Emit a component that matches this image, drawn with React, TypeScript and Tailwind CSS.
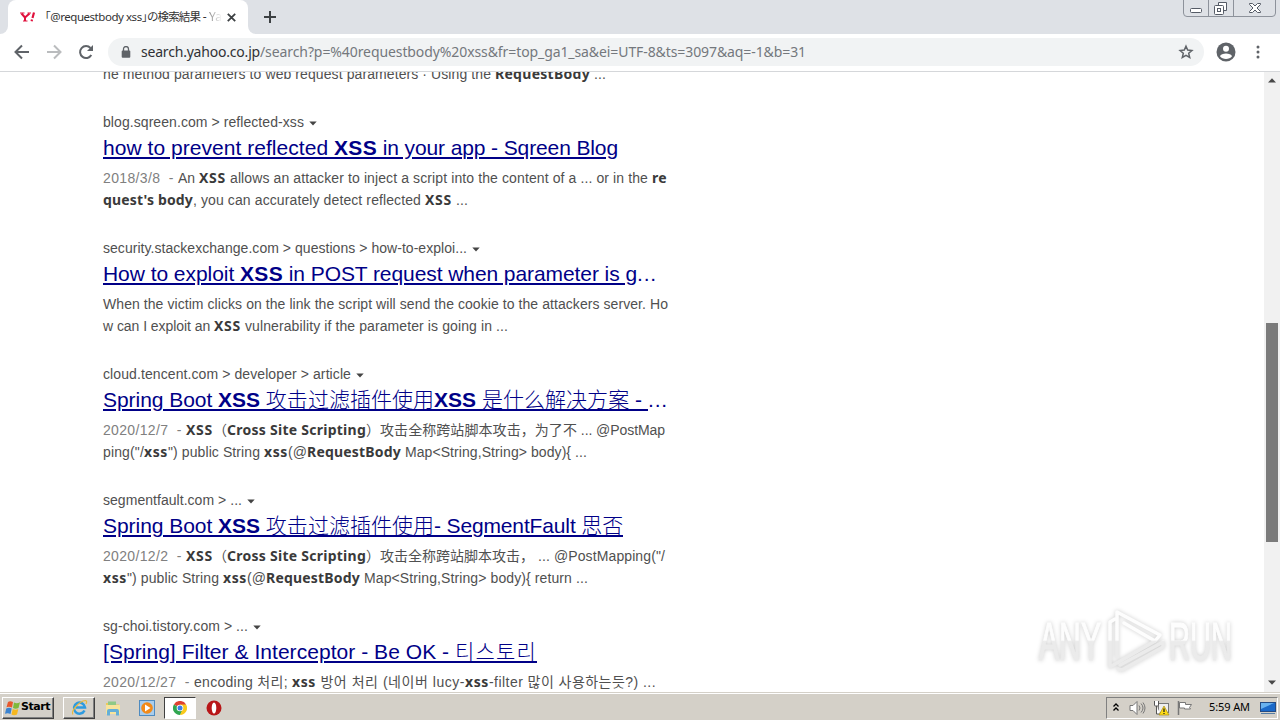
import React, { useLayoutEffect, useRef } from 'react';

interface Run {
  text: string;
  width: number;
  bold?: boolean;
  muted?: boolean;
  plain?: boolean;
}

interface Result {
  crumb: Run;
  title: Run[];
  lines: Run[][];
}

const RESULTS: Result[] = [
  {
    crumb: { text: 'blog.sqreen.com > reflected-xss', width: 201 },
    title: [
      { text: 'how to prevent reflected ', width: 231 },
      { text: 'XSS', width: 43, bold: true },
      { text: ' in your app - Sqreen Blog', width: 241 },
    ],
    lines: [
      [
        { text: '2018/3/8  - ', width: 75, muted: true },
        { text: 'An ', width: 21 },
        { text: 'XSS', width: 27, bold: true },
        { text: ' allows an attacker to inject a script into the content of a ... or in the ', width: 426 },
        { text: 're', width: 15, bold: true },
      ],
      [
        { text: "quest's body", width: 90, bold: true },
        { text: ', you can accurately detect reflected ', width: 232 },
        { text: 'XSS', width: 27, bold: true },
        { text: ' ...', width: 16 },
      ],
    ],
  },
  {
    crumb: { text: 'security.stackexchange.com > questions > how-to-exploi...', width: 364 },
    title: [
      { text: 'How to exploit ', width: 137 },
      { text: 'XSS', width: 43, bold: true },
      { text: ' in POST request when parameter is g', width: 354 },
      { text: '...', width: 20, plain: true },
    ],
    lines: [
      [{ text: 'When the victim clicks on the link the script will send the cookie to the attackers server. Ho', width: 565 }],
      [
        { text: 'w can I exploit an ', width: 111 },
        { text: 'XSS', width: 27, bold: true },
        { text: ' vulnerability if the parameter is going in ...', width: 267 },
      ],
    ],
  },
  {
    crumb: { text: 'cloud.tencent.com > developer > article', width: 248 },
    title: [
      { text: 'Spring Boot ', width: 115 },
      { text: 'XSS', width: 42, bold: true },
      { text: ' 攻击过滤插件使用', width: 174 },
      { text: 'XSS', width: 42, bold: true },
      { text: ' 是什么解决方案 - ', width: 172 },
      { text: '...', width: 20, plain: true },
    ],
    lines: [
      [
        { text: '2020/12/7  - ', width: 83, muted: true },
        { text: 'XSS', width: 27, bold: true },
        { text: '（', width: 14 },
        { text: 'Cross Site Scripting', width: 139, bold: true },
        { text: '）', width: 14 },
        { text: '攻击全称跨站脚本攻击，为了不', width: 197 },
        { text: ' ... @PostMap', width: 88 },
      ],
      [
        { text: 'ping("/', width: 41 },
        { text: 'xss', width: 24, bold: true },
        { text: '") public String ', width: 96 },
        { text: 'xss', width: 24, bold: true },
        { text: '(@', width: 19 },
        { text: 'RequestBody', width: 94, bold: true },
        { text: ' Map<String,String> body){ ...', width: 186 },
      ],
    ],
  },
  {
    crumb: { text: 'segmentfault.com > ...', width: 139 },
    title: [
      { text: 'Spring Boot ', width: 115 },
      { text: 'XSS', width: 42, bold: true },
      { text: ' 攻击过滤插件使用', width: 174 },
      { text: '- SegmentFault 思否', width: 189 },
    ],
    lines: [
      [
        { text: '2020/12/2  - ', width: 83, muted: true },
        { text: 'XSS', width: 27, bold: true },
        { text: '（', width: 14 },
        { text: 'Cross Site Scripting', width: 139, bold: true },
        { text: '）', width: 14 },
        { text: '攻击全称跨站脚本攻击，', width: 154 },
        { text: ' ... @PostMapping("/', width: 131 },
      ],
      [
        { text: 'xss', width: 24, bold: true },
        { text: '") public String ', width: 96 },
        { text: 'xss', width: 24, bold: true },
        { text: '(@', width: 19 },
        { text: 'RequestBody', width: 94, bold: true },
        { text: ' Map<String,String> body){ return ...', width: 228 },
      ],
    ],
  },
  {
    crumb: { text: 'sg-choi.tistory.com > ...', width: 145 },
    title: [
      { text: '[Spring] Filter & Interceptor - Be OK - ', width: 352 },
      { text: '티스토리', width: 82 },
    ],
    lines: [
      [
        { text: '2020/12/27  - ', width: 91, muted: true },
        { text: 'encoding 처리; ', width: 98 },
        { text: 'xss', width: 24, bold: true },
        { text: ' 방어 처리 (네이버 lucy-', width: 149 },
        { text: 'xss', width: 24, bold: true },
        { text: '-filter 많이 사용하는듯?) ...', width: 167 },
      ],
    ],
  },
];

const LAST_LINE: Run[] = [
  { text: 'he method parameters to web request parameters · Using the ', width: 392 },
  { text: 'RequestBody', width: 95, bold: true },
  { text: ' ...', width: 16 },
];

// Spreads the letters of a text so that it takes exactly the given width
const Fit: React.FC<{ text: string; width: number; className?: string }> = ({ text, width, className = '' }) => {
  const ref = useRef<HTMLSpanElement>(null);

  useLayoutEffect(() => {
    const el = ref.current;
    if (!el) return;
    el.style.letterSpacing = '0px';
    const natural = el.getBoundingClientRect().width;
    el.style.letterSpacing = `${(width - natural) / text.length}px`;
  }, [text, width]);

  return (
    <span ref={ref} className={`shrink-0 whitespace-pre ${className}`}>{text}</span>
  );
};

const TextLine: React.FC<{ runs: Run[] }> = ({ runs }) => (
  <p className="flex h-[22px] text-[14px] leading-[22px] text-[#505050]">
    {runs.map((r, i) => (
      <Fit
        key={i}
        text={r.text}
        width={r.width}
        className={
          r.bold
            ? "font-bold text-[#3a3a3a] font-['Noto_Sans','Noto_Sans_CJK_SC',sans-serif]"
            : r.muted
              ? 'text-[#808080]'
              : ''
        }
      />
    ))}
  </p>
);

const ResultItem: React.FC<{ result: Result }> = ({ result }) => (
  <article className="mb-[26px]">
    <div className="flex h-[22px] items-center text-[14px] leading-[22px] text-[#505050]">
      <Fit text={result.crumb.text} width={result.crumb.width} />
      <svg className="ml-[5px] mt-[3px]" width="8" height="5" viewBox="0 0 8 5"><path d="M0.3 0.5h7.4L4 4.6z" fill="#444" /></svg>
    </div>
    <h3 className="flex h-[30px] text-[21px] font-light leading-[30px] text-[#000087]">
      {result.title.map((r, i) => (
        <Fit
          key={i}
          text={r.text}
          width={r.width}
          className={r.plain ? '' : r.bold ? 'font-bold underline decoration-2 underline-offset-2' : 'underline decoration-2 underline-offset-2'}
        />
      ))}
    </h3>
    <div className="mt-1">
      {result.lines.map((line, i) => <TextLine key={i} runs={line} />)}
    </div>
  </article>
);

const WindowButtons = () => (
  <svg className="ml-auto mr-[3px]" width="94" height="18" viewBox="0 0 94 18" fill="none">
    <path d="M.5 0v13q0 3.5 3.5 3.5h85q3.5 0 3.5-3.5V0M25.5 0v16M50.5 0v16" stroke="#8d929b" />
    <rect x="7.5" y="8.500" width="11" height="4" rx="1" fill="#fff" stroke="#555b66" />
    <path d="M35.500 5V2.500h8v8H41" fill="#fff" stroke="#555b66" />
    <rect x="31.500" y="5.500" width="9" height="9" rx="1" fill="#fff" stroke="#555b66" />
    <rect x="34.500" y="8.500" width="3" height="3" stroke="#555b66" />
    <path d="M66.500 3.500h3l2.500 2.500 2.500-2.500h3v1L74 8l3.500 3.500v1h-3L72 10l-2.500 2.500h-3v-1L70 8l-3.500-3.500z" fill="#fff" stroke="#555b66" />
  </svg>
);

const TabStrip = () => (
  <div className="flex h-[34px] items-start bg-[#dee1e6]">
    <div className="flex h-[34px] w-2 items-end bg-white">
      <div className="h-[34px] w-2 rounded-br-lg bg-[#dee1e6]" />
    </div>
    <div className="h-[34px] w-60 bg-[#dee1e6]">
      <div className="flex h-[34px] items-center rounded-t-lg bg-white pl-3">
        <svg width="16" height="16" viewBox="0 0 16 16" fill="none" stroke="#e0103c">
          <path d="M1.500 4.500L5 8.500M9.500 4.500L5 8.500M5 8.500V12" strokeWidth="2" />
          <path d="M0 4h4.500M7.500 4H11M3 12h4.500" strokeWidth="1" />
          <path d="M14 3.500l-1.500 5.500M12 10.500l-.4 1.700" strokeWidth="2.200" />
        </svg>
        <div className="ml-[9px] w-[177px] overflow-hidden text-[12px] leading-4 text-[#333]">
          <div className="flex font-['Noto_Sans','Noto_Sans_CJK_JP',sans-serif]">
            <Fit text="｢@requestbody xss｣" width={102} className="text-[11.5px]" />
            <Fit text="の検索結果" width={53} className="text-[11.5px]" />
            <Fit text=" - " width={9} />
            <span className="bg-linear-to-r from-[#888] to-white bg-clip-text text-transparent">Ya</span>
          </div>
        </div>
        <svg className="ml-[5px]" width="9" height="9" viewBox="0 0 9 9"><path d="M.8.8l7.400 7.400M8.200.8L.8 8.200" stroke="#3c4043" strokeWidth="1.800" /></svg>
      </div>
    </div>
    <div className="h-[34px] w-2 bg-white">
      <div className="h-[34px] w-2 rounded-bl-lg bg-[#dee1e6]" />
    </div>
    <svg className="ml-[8px] mt-[11px]" width="12" height="12" viewBox="0 0 12 12"><path d="M6 0v12M0 6h12" stroke="#3c4043" strokeWidth="2" /></svg>
    <WindowButtons />
  </div>
);

const Toolbar = () => (
  <div className="flex h-[38px] items-center border-b border-[#d5d7da] bg-white pl-[14px] pb-[1px]">
    <svg width="16" height="16" viewBox="0 0 16 16" fill="none" stroke="#5f6368" strokeWidth="2"><path d="M15 8H2M8 1.500L1.500 8 8 14.500" /></svg>
    <svg className="ml-4" width="16" height="16" viewBox="0 0 16 16" fill="none" stroke="#babcbe" strokeWidth="2"><path d="M1 8h13M8 1.500L14.500 8 8 14.500" /></svg>
    <svg className="ml-4" width="16" height="16" viewBox="0 0 16 16"><path d="M13.300 11A6 6 0 1 1 12.500 4" fill="none" stroke="#5f6368" strokeWidth="2" /><path d="M15 1v6H9z" fill="#5f6368" /></svg>
    <div className="ml-[14px] flex h-7 w-[1096px] items-center rounded-full bg-[#f1f3f4] pl-[13px] pr-[10px]">
      <svg width="10" height="12" viewBox="0 0 10 12"><path d="M2.500 5V3a2.500 2.500 0 0 1 5 0v2" fill="none" stroke="#5f6368" strokeWidth="1.300" /><rect x="0.700" y="4.500" width="8.600" height="7.300" rx="1" fill="#5f6368" /></svg>
      <div className="ml-[10px] flex font-['Noto_Sans',sans-serif] text-[14px] leading-7">
        <Fit text="search.yahoo.co.jp" width={119} className="text-[#303134]" />
        <Fit text="/search?p=%40requestbody%20xss&fr=top_ga1_sa&ei=UTF-8&ts=3097&aq=-1&b=31" width={546} className="text-[#74787d]" />
      </div>
      <svg className="ml-auto" width="16" height="16" viewBox="0 0 16 16"><path d="M8 2.200l1.700 3.900 4.200.4-3.200 2.800 1 4.200L8 11.300l-3.700 2.200 1-4.200-3.200-2.800 4.200-.4z" fill="none" stroke="#5f6368" strokeWidth="1.500" /></svg>
    </div>
    <svg className="ml-3" width="20" height="20" viewBox="0 0 20 20"><circle cx="10" cy="10" r="9.500" fill="#5f6368" /><circle cx="10" cy="6.700" r="3" fill="#fff" /><path d="M4 14.200c1-3.700 11-3.700 12 0-2.500 3.700-9.500 3.700-12 0z" fill="#fff" /></svg>
    <svg className="ml-[20px]" width="4" height="14" viewBox="0 0 4 14" fill="#5f6368"><circle cx="2" cy="2" r="1.500" /><circle cx="2" cy="7" r="1.500" /><circle cx="2" cy="12" r="1.500" /></svg>
  </div>
);

const ScrollBar = () => (
  <div className="flex w-4 shrink-0 flex-col items-center bg-[#f1f1f1]">
    <svg className="mt-[6px]" width="8" height="5" viewBox="0 0 8 5"><path d="M0 4.500h8L4 .3z" fill="#484848" /></svg>
    <div className="mt-[240px] h-[219px] w-3 bg-[#7b7b7b]" />
    <svg className="mb-[7px] mt-auto" width="8" height="5" viewBox="0 0 8 5"><path d="M0 .5h8L4 4.700z" fill="#484848" /></svg>
  </div>
);

const Watermark = () => (
  <svg
    className="absolute left-[1030px] top-[600px] drop-shadow-[0_0_2px_rgba(0,0,0,0.2)]"
    width="212"
    height="80"
    viewBox="0 0 212 80"
  >
    <defs>
      <linearGradient id="sheen" x1="0" y1="0" x2="0" y2="80" gradientUnits="userSpaceOnUse">
        <stop offset="0.500" stopColor="#fdfdfd" />
        <stop offset="0.520" stopColor="#ebebeb" />
      </linearGradient>
    </defs>
    <g fill="url(#sheen)" stroke="url(#sheen)" strokeWidth="1" fontFamily="'Liberation Sans Narrow', 'Liberation Sans', sans-serif" fontSize="53">
      <text x="9" y="59.500" textLength="62" lengthAdjust="spacingAndGlyphs">ANY</text>
      <text x="139" y="59.500" textLength="63" lengthAdjust="spacingAndGlyphs">RUN</text>
    </g>
    <g fill="none" stroke="url(#sheen)" strokeWidth="3.500" strokeLinejoin="round" strokeLinecap="round">
      <path d="M85 19l-5 3v45l5-3" />
      <path d="M87 57V12l43 23-5 6-31-18" />
      <path d="M87 63l38-22" />
      <path d="M88 69l4 1 41-23v-5l-43 23" />
    </g>
  </svg>
);

const Taskbar = () => (
  <footer className="flex h-7 items-center border-t border-[#d4d0c8] bg-[#d4d0c8] shadow-[inset_0_1px_0_#fff]">
    <div className="ml-[2px] mt-[2px] flex h-[22px] w-[52px] items-center border border-b-[#404040] border-l-white border-r-[#404040] border-t-white pl-[2px] shadow-[inset_-1px_-1px_0_#808080]">
      <svg width="16" height="16" viewBox="0 0 16 16">
        <path d="M3 2q2-1.500 5 0L7 7.500q-3-1.500-5.500-.3z" fill="#e8582c" />
        <path d="M9 2.500q3 1.500 6-.3L13.500 8q-3 1.300-5.500 0z" fill="#7fb93a" />
        <path d="M1.200 8.500q3-1.300 5.500 0L5.500 14Q3 12.500 0 13.700z" fill="#3b83d0" />
        <path d="M7.700 9q3 1.300 5.600 0L12 14.500q-3 1.300-5.500 0z" fill="#f6b820" />
      </svg>
      <span className="font-['DejaVu_Sans',sans-serif] text-[11px] font-bold text-black"><Fit text="Start" width={29} /></span>
    </div>
    <div className="ml-[9px] mt-[2px] flex h-[22px] w-8 items-center justify-center border border-b-[#404040] border-l-white border-r-[#404040] border-t-white shadow-[inset_-1px_-1px_0_#808080]">
      <svg width="17" height="17" viewBox="0 0 17 17" fill="none">
        <path d="M13.500 11.500A5.500 5.500 0 1 1 14 8.500H5" stroke="#2d9be0" strokeWidth="2.500" />
        <path d="M2 15.500C-1 13 8 2 14.500 1.500q2 .2.500 3.500" stroke="#e9b93c" strokeWidth="1.200" />
      </svg>
    </div>
    <svg className="ml-[10px] mt-[2px]" width="16" height="16" viewBox="0 0 16 16">
      <path d="M1 3h5l1 1.500h7V14H1z" fill="#edc95d" />
      <path d="M3 1.500h8V5H3z" fill="#8fc986" />
      <path d="M1 5h14v9H1z" fill="#f8e49b" />
      <path d="M2 15.500V11q0-2 2-2h8q2 0 2 2v4.500h-3V12H5v3.500z" fill="#65afd7" />
    </svg>
    <svg className="ml-[18px] mt-[2px]" width="16" height="16" viewBox="0 0 16 16">
      <rect x=".5" y=".5" width="15" height="15" fill="#a9cdec" stroke="#4e8bc0" />
      <circle cx="8" cy="8" r="5.800" fill="#f28a18" />
      <path d="M6 4.500L11.500 8 6 11.500z" fill="#fff" />
    </svg>
    <div className="ml-[9px] mt-[2px] flex h-[22px] w-8 items-center justify-center border border-b-white border-l-[#404040] border-r-white border-t-[#404040] bg-white">
      <svg width="14" height="14" viewBox="0 0 14 14">
        <path d="M7 7L.9 3.500A7 7 0 0 1 13.100 3.500z" fill="#df4131" />
        <path d="M7 7L.9 3.500A7 7 0 0 0 7 14l3-5z" fill="#30a650" />
        <path d="M7 7h3L7 14a7 7 0 0 0 6.100-10.500H7z" fill="#f9c91c" />
        <circle cx="7" cy="7" r="3.300" fill="#fff" />
        <circle cx="7" cy="7" r="2.500" fill="#3b7ee5" />
      </svg>
    </div>
    <svg className="ml-[10px] mt-[2px]" width="16" height="16" viewBox="0 0 16 16">
      <circle cx="8" cy="8" r="7.500" fill="#b81618" />
      <ellipse cx="8" cy="8" rx="2.300" ry="5.500" fill="#fff" />
    </svg>
    <div className="ml-auto mr-[2px] mt-[2px] flex h-[22px] w-[172px] items-center border border-b-white border-l-[#808080] border-r-white border-t-[#808080] pl-[6px]">
      <svg width="6" height="9" viewBox="0 0 6 9" fill="none" stroke="#000" strokeWidth="1.300"><path d="M.5 3.500L3 1l2.500 2.500M.5 7.500L3 5l2.500 2.500" /></svg>
      <svg className="ml-[10px]" width="17" height="16" viewBox="0 0 17 16" stroke="#777" fill="none">
        <path d="M1 5.500h3L8 1.500v13l-4-4H1z" fill="#fff" />
        <path d="M10 5.500q2 2.500 0 5M12 3.500q4 4.500 0 9M14 2.500q4 5.500 0 11" />
      </svg>
      <svg className="ml-[7px]" width="17" height="16" viewBox="0 0 17 16">
        <rect x="5.500" y="3.500" width="10" height="9" fill="#eee" stroke="#777" />
        <path d="M1.500 1v4q0 1 1 1h2q1 0 1-1V1M3.500 6v8h4" fill="#fff" stroke="#555" />
        <path d="M11 6l5 9H6z" fill="#ffdc16" stroke="#a88c19" strokeWidth=".7" />
        <path d="M11 8.500v3.500M11 13v1" stroke="#222" strokeWidth="1.300" />
      </svg>
      <svg className="ml-[7px]" width="17" height="16" viewBox="0 0 17 16"><path d="M1.500 1v14" stroke="#777" strokeWidth="1.500" /><path d="M2.500 2.500h6v2h6l-2 3 1 1.500H7.500V8h-5z" fill="#fff" stroke="#777" /></svg>
      <div className="ml-[15px] w-[41px] font-['Noto_Sans',sans-serif] text-[11px] text-black"><Fit text="5:59 AM" width={41} /></div>
      <svg className="ml-[10px]" width="16" height="14" viewBox="0 0 16 14"><rect x=".5" y="1.500" width="15" height="9" fill="#1b69c8" stroke="#244b83" /><path d="M1 2h13L1 8z" fill="#68b1ee" /><path d="M1 12.500h14" stroke="#567da4" /></svg>
    </div>
  </footer>
);

export default function App() {
  return (
    <div className="relative flex h-[720px] w-[1280px] flex-col overflow-hidden bg-white font-['Liberation_Sans','Noto_Sans_CJK_SC','Noto_Sans_CJK_KR',sans-serif]">
      <TabStrip />
      <Toolbar />
      <div className="flex h-[620px] overflow-hidden">
        <main className="h-[620px] flex-1 overflow-hidden pl-[103px]">
          <div className="-mt-[9px] mb-[26px]">
            <TextLine runs={LAST_LINE} />
          </div>
          {RESULTS.map(r => <ResultItem key={r.crumb.text} result={r} />)}
        </main>
        <ScrollBar />
      </div>
      <Taskbar />
      <Watermark />
    </div>
  );
}
